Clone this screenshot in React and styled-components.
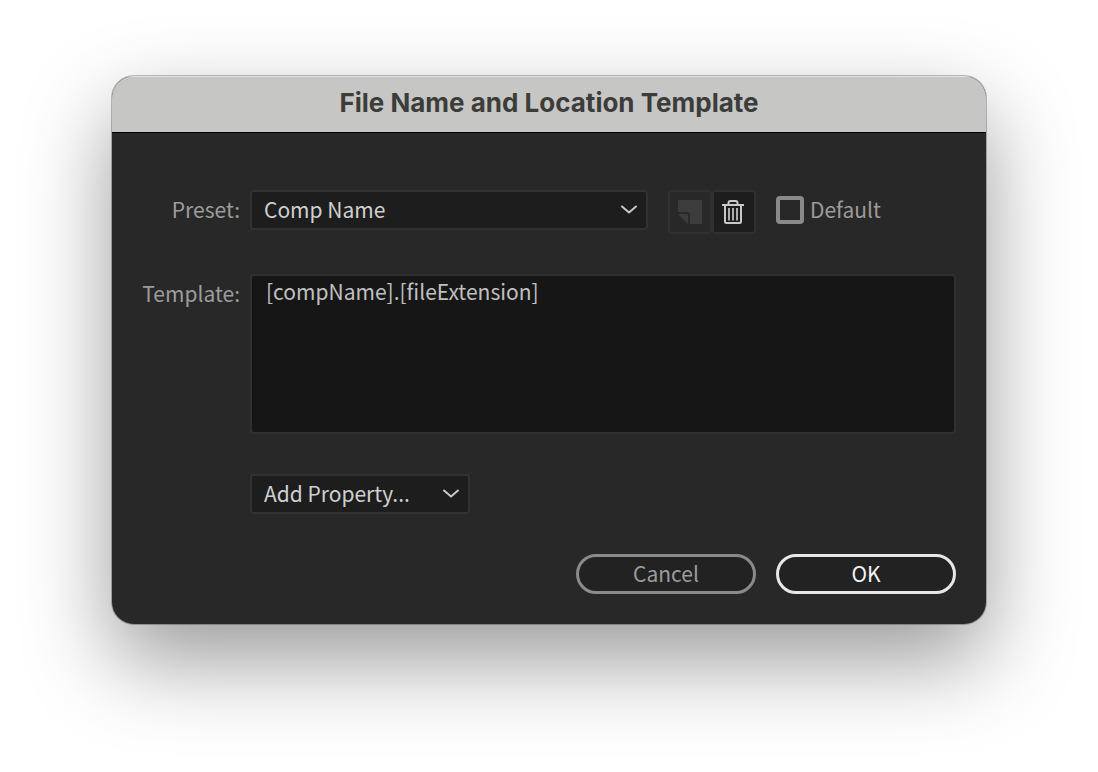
import React, { useState } from 'react';
import styled, { createGlobalStyle } from 'styled-components';

const GlobalStyle = createGlobalStyle`
  * {
    box-sizing: border-box;
  }

  body {
    margin: 0;
    background: #fff;
    font-family: 'Noto Sans CJK SC', 'Noto Sans', sans-serif;
    font-size: 21px;
    line-height: 30px;
  }

  button,
  select,
  textarea {
    font: inherit;
    margin: 0;
  }
`;

const Page = styled.main`
  padding: 76px 112px 148px;
`;

const Dialog = styled.section`
  border-radius: 22px;
  overflow: hidden;
  background: #282828;
  box-shadow: 0 0 0 1px rgba(0, 0, 0, 0.25), 0 36px 88px rgba(0, 0, 0, 0.4);
`;

const TitleBar = styled.header`
  height: 57px;
  padding-top: 11px;
  background: #c6c6c4;
  border-bottom: 1px solid #000;
  box-shadow: inset 0 2px 0 -1px #e2e2e0;
  text-align: center;
`;

const Title = styled.h1`
  margin: 0;
  font-family: Inter, sans-serif;
  font-size: 26px;
  font-weight: 700;
  line-height: 32px;
  color: #3c3c3a;
`;

const Form = styled.form`
  padding: 57px 30px 30px;
  display: grid;
  grid-template-columns: 98px 1fr;
  column-gap: 10px;
  row-gap: 40px;
`;

const Label = styled.label`
  padding-top: 4px;
  text-align: right;
  color: #9c9c9c;
`;

const Row = styled.div`
  grid-column: 2;
  display: flex;
  align-items: flex-start;
  gap: 20px;
`;

const Picker = styled.div`
  position: relative;
  flex: 0 1 ${({ $width }) => $width}px;

  svg {
    position: absolute;
    right: 10px;
    top: 14px;
    pointer-events: none;
  }
`;

const Select = styled.select`
  display: block;
  width: 100%;
  height: 40px;
  padding: 0 36px 2px 12px;
  appearance: none;
  background: #1d1d1d;
  border: 2px solid #323232;
  border-radius: 4px;
  color: #d0d0d0;
`;

const IconGroup = styled.div`
  display: flex;
`;

const IconButton = styled.button`
  width: 44px;
  height: 44px;
  padding: 0;
  display: flex;
  align-items: center;
  justify-content: center;
  background: ${({ disabled }) => (disabled ? 'transparent' : '#1d1d1d')};
  border: 2px solid #303030;
  border-radius: 4px;
  color: ${({ disabled }) => (disabled ? '#3c3c3c' : '#c8c8c8')};
`;

const CheckLabel = styled.label`
  height: 40px;
  display: flex;
  align-items: center;
  gap: 6px;
  color: #9c9c9c;
`;

const CheckText = styled.span`
  padding-bottom: 2px;
`;

const Checkbox = styled.input`
  width: 28px;
  height: 28px;
  margin: 0;
  appearance: none;
  border: 4px solid #8a8a8a;
  border-radius: 4px;

  &:checked {
    background: #8a8a8a;
  }
`;

const TemplateBox = styled.textarea`
  display: block;
  width: 100%;
  height: 160px;
  padding: 0 14px;
  resize: none;
  background: #161616;
  border: 2px solid #303030;
  border-radius: 4px;
  color: #c0c0c0;
`;

const Footer = styled.footer`
  grid-column: 1 / -1;
  display: flex;
  justify-content: flex-end;
  gap: 20px;
`;

const PillButton = styled.button`
  width: 180px;
  height: 40px;
  padding: 0 0 2px;
  background: #222;
  border: 3px solid ${({ $primary }) => ($primary ? '#e8e8e8' : '#8a8a8a')};
  border-radius: 20px;
  color: ${({ $primary }) => ($primary ? '#f4f4f4' : '#9c9c9c')};
`;

const Chevron = () => (
  <svg width="18" height="12" viewBox="0 0 18 12" fill="none" aria-hidden="true">
    <path d="M2 2.5L9 8.5L16 2.5" stroke="#c8c8c8" strokeWidth="2" strokeLinecap="round" strokeLinejoin="round" />
  </svg>
);

const SaveIcon = () => (
  <svg width="24" height="24" viewBox="0 0 24 24" fill="currentColor" aria-hidden="true">
    <path d="M0 0H24V24H12V14.5Q12 12 9.5 12H0Z" />
    <path d="M0 14H8.5Q10 14 10 15.5V24Z" />
  </svg>
);

const TrashIcon = () => (
  <svg width="24" height="26" viewBox="0 0 24 26" fill="none" stroke="currentColor" strokeWidth="2" aria-hidden="true">
    <path d="M0 6H22" />
    <path d="M6.5 5.5V4Q6.5 2 8.5 2H13.5Q15.5 2 15.5 4V5.5" />
    <path d="M3 6V22.5Q3 24 4.5 24H17.5Q19 24 19 22.5V6" />
    <path d="M7 9V21.5M11 9V21.5M15 9V21.5" strokeWidth="1.7" />
  </svg>
);

const App = () => {
  const [template, setTemplate] = useState('[compName].[fileExtension]');

  return (
    <>
      <GlobalStyle />
      <Page>
        <Dialog role="dialog" aria-labelledby="dialog-title">
          <TitleBar>
            <Title id="dialog-title">File Name and Location Template</Title>
          </TitleBar>
          <Form onSubmit={(e) => e.preventDefault()}>
            <Label htmlFor="preset">Preset:</Label>
            <Row>
              <Picker $width={398}>
                <Select id="preset">
                  <option>Comp Name</option>
                </Select>
                <Chevron />
              </Picker>
              <IconGroup>
                <IconButton type="button" aria-label="Save preset" disabled>
                  <SaveIcon />
                </IconButton>
                <IconButton type="button" aria-label="Delete preset">
                  <TrashIcon />
                </IconButton>
              </IconGroup>
              <CheckLabel>
                <Checkbox type="checkbox" />
                <CheckText>Default</CheckText>
              </CheckLabel>
            </Row>

            <Label htmlFor="template">Template:</Label>
            <TemplateBox
              id="template"
              spellCheck={false}
              value={template}
              onChange={(e) => setTemplate(e.target.value)}
            />

            <Row>
              <Picker $width={220}>
                <Select aria-label="Add Property">
                  <option>Add Property...</option>
                </Select>
                <Chevron />
              </Picker>
            </Row>

            <Footer>
              <PillButton type="button">Cancel</PillButton>
              <PillButton type="submit" $primary>
                OK
              </PillButton>
            </Footer>
          </Form>
        </Dialog>
      </Page>
    </>
  );
};

export default App;
